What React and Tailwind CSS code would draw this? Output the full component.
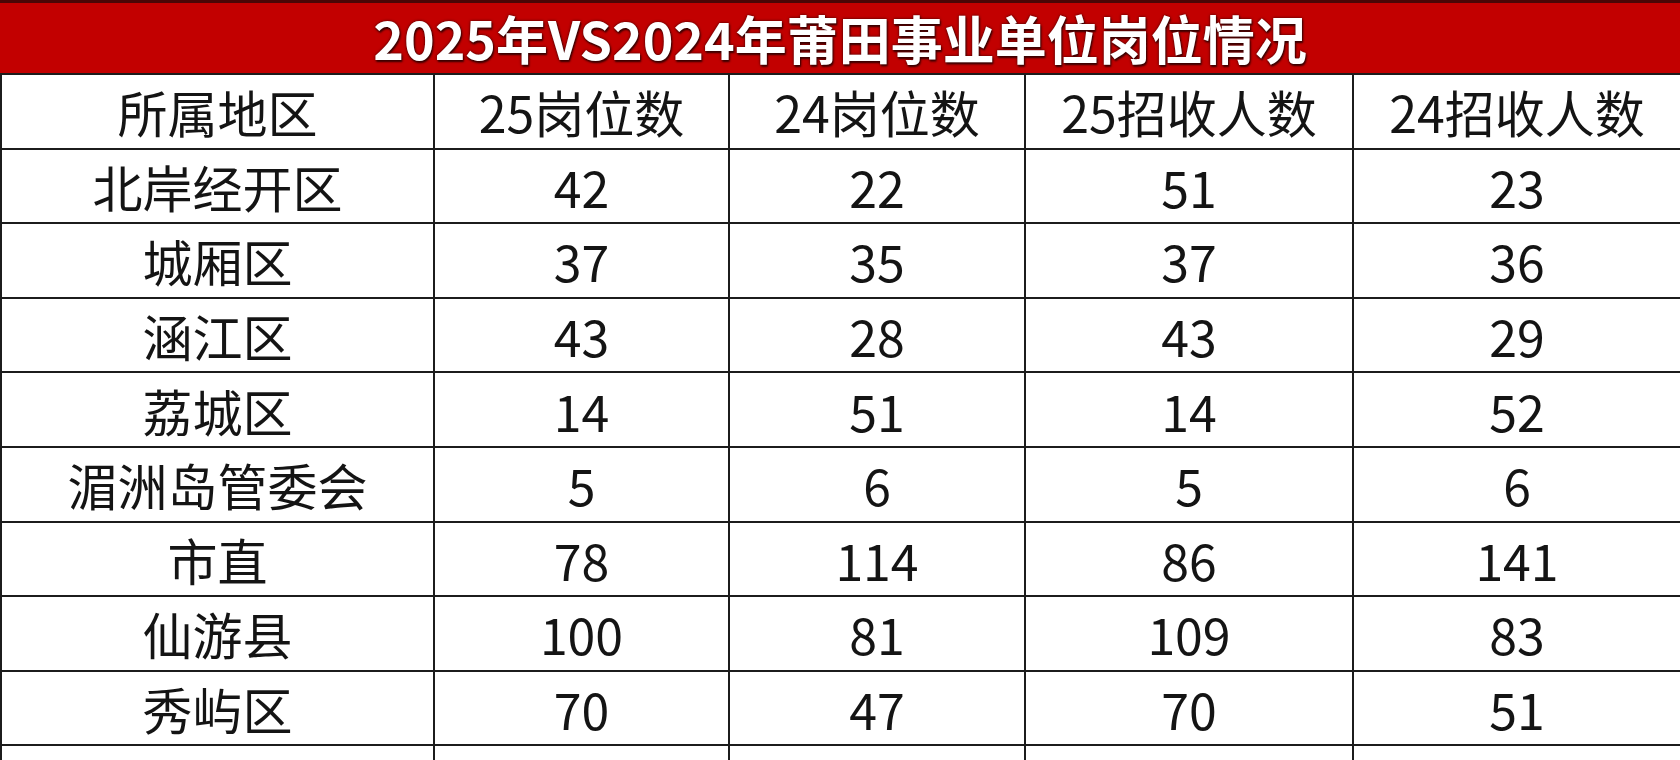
const font = { fontFamily: '"Noto Sans CJK SC", "Noto Sans", sans-serif' };

const headers = ["所属地区", "25岗位数", "24岗位数", "25招收人数", "24招收人数"];

const rows = [
  ["北岸经开区", 42, 22, 51, 23],
  ["城厢区", 37, 35, 37, 36],
  ["涵江区", 43, 28, 43, 29],
  ["荔城区", 14, 51, 14, 52],
  ["湄洲岛管委会", 5, 6, 5, 6],
  ["市直", 78, 114, 86, 141],
  ["仙游县", 100, 81, 109, 83],
  ["秀屿区", 70, 47, 70, 51],
  ["", "", "", "", ""],
];

function Row({ cells }) {
  return (
    <div className="grid h-[74.6px] shrink-0 grid-cols-[433px_295px_296px_328px_1fr] border-b-2 border-[#1c1c1c]">
      {cells.map((c, i) => (
        <div
          key={i}
          className={
            "flex items-center justify-center text-[50px] leading-none text-[#141414] " +
            (i < 4 ? "border-r-2 border-[#1c1c1c]" : "")
          }
        >
          {c}
        </div>
      ))}
    </div>
  );
}

export default function App() {
  return (
    <div className="h-[760px] w-[1680px] overflow-hidden bg-white" style={font}>
      {/* title bar */}
      <div className="flex h-[73px] items-center justify-center border-t-[3px] border-[#4a0606] bg-[#c20000]">
        <h1 className="text-[52px] font-bold leading-[1.1] text-white [text-shadow:0_0_3px_#3a0000,1px_2px_2px_#3a0000]">
          2025年VS2024年莆田事业单位岗位情况
        </h1>
      </div>

      <div className="flex flex-col border-t-2 border-l-2 border-[#1c1c1c]">
        <Row cells={headers} />
        {rows.map((r, i) => (
          <Row key={i} cells={r} />
        ))}
      </div>
    </div>
  );
}
